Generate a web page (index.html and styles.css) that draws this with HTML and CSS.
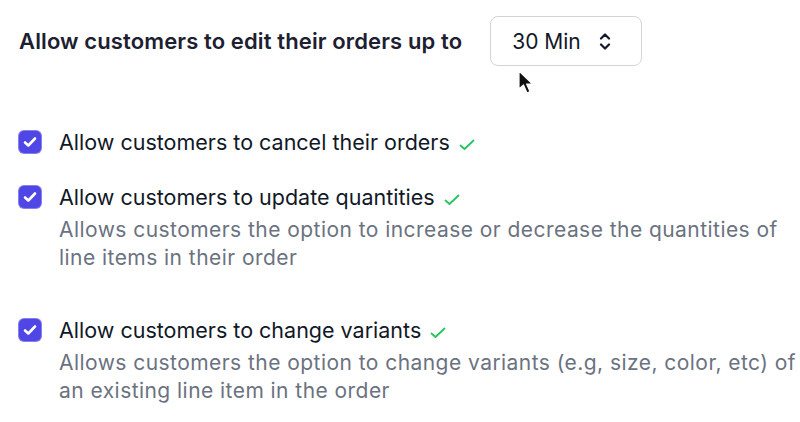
FILE: index.html
```html
<!DOCTYPE html>
<html lang="en">
<head>
<meta charset="utf-8">
<title>Order editing settings</title>
<link rel="stylesheet" href="styles.css">
</head>
<body>
<main class="settings">
  <div class="window-row">
    <span class="window-label">Allow customers to edit their orders up to</span>
    <div class="select">
      <span class="select-value">30 Min</span>
      <svg class="select-icon" width="12" height="17" viewBox="0 0 12 17" fill="none" stroke="#111827" stroke-width="2.2" stroke-linecap="round" stroke-linejoin="round"><path d="M2 5.5 L6 1.5 L10 5.5"/><path d="M2 11.5 L6 15.5 L10 11.5"/></svg>
      <svg class="cursor" width="18" height="26" viewBox="0 0 18 26"><path d="M1 1 L1 19 L5.5 15 L9 23 L12 21.6 L8.6 14 L14.5 14 Z" fill="#111" stroke="#fff" stroke-width="1.2" stroke-linejoin="round"/></svg>
    </div>
  </div>

  <ul class="options">
    <li class="option">
      <span class="checkbox"><svg width="14" height="12" viewBox="0 0 14 12" fill="none" stroke="#fff" stroke-width="2.6" stroke-linecap="round" stroke-linejoin="round"><path d="M2 6.5 L5.3 9.5 L12 2.5"/></svg></span>
      <div class="option-body">
        <div class="option-title">Allow customers to cancel their orders <svg class="ok" width="16" height="12" viewBox="0 0 16 12" fill="none" stroke="#22c55e" stroke-width="1.8" stroke-linecap="round" stroke-linejoin="round"><path d="M1.5 6.5 L5.5 10 L14.5 1.5"/></svg></div>
      </div>
    </li>
    <li class="option">
      <span class="checkbox"><svg width="14" height="12" viewBox="0 0 14 12" fill="none" stroke="#fff" stroke-width="2.6" stroke-linecap="round" stroke-linejoin="round"><path d="M2 6.5 L5.3 9.5 L12 2.5"/></svg></span>
      <div class="option-body">
        <div class="option-title">Allow customers to update quantities <svg class="ok" width="16" height="12" viewBox="0 0 16 12" fill="none" stroke="#22c55e" stroke-width="1.8" stroke-linecap="round" stroke-linejoin="round"><path d="M1.5 6.5 L5.5 10 L14.5 1.5"/></svg></div>
        <p class="option-desc">Allows customers the option to increase or decrease the quantities of line items in their order</p>
      </div>
    </li>
    <li class="option option-spaced">
      <span class="checkbox"><svg width="14" height="12" viewBox="0 0 14 12" fill="none" stroke="#fff" stroke-width="2.6" stroke-linecap="round" stroke-linejoin="round"><path d="M2 6.5 L5.3 9.5 L12 2.5"/></svg></span>
      <div class="option-body">
        <div class="option-title">Allow customers to change variants <svg class="ok" width="16" height="12" viewBox="0 0 16 12" fill="none" stroke="#22c55e" stroke-width="1.8" stroke-linecap="round" stroke-linejoin="round"><path d="M1.5 6.5 L5.5 10 L14.5 1.5"/></svg></div>
        <p class="option-desc">Allows customers the option to change variants (e.g, size, color, etc) of an existing line item in the order</p>
      </div>
    </li>
  </ul>
</main>
</body>
</html>
```

FILE: styles.css
```css
* { box-sizing: border-box; }
html, body { margin: 0; padding: 0; background: #ffffff; }
body {
  font-family: Inter, "Noto Sans", "Liberation Sans", sans-serif;
  color: #111827;
  width: 800px;
  height: 422px;
  overflow: hidden;
}
.settings {
  padding: 16px 0 0 19px;
}
.window-row {
  display: flex;
  align-items: center;
  gap: 28px;
}
.window-label {
  font-size: 22px;
  font-weight: 600;
  letter-spacing: 0.12px;
  color: #1c2030;
}
.select {
  position: relative;
  width: 152px;
  height: 50px;
  border: 1px solid #d1d5db;
  border-radius: 8px;
  display: flex;
  align-items: center;
  padding-left: 21px;
  gap: 18px;
}
.select-value {
  font-size: 21px;
  color: #111827;
}
.select-icon { display: block; }
.cursor {
  position: absolute;
  left: 27px;
  top: 53px;
}
.options {
  list-style: none;
  margin: 62px 0 0;
  padding: 0;
  display: flex;
  flex-direction: column;
}
.option {
  display: flex;
  align-items: flex-start;
  gap: 18px;
}
.option + .option { margin-top: 27px; }
.option-spaced.option { margin-top: 44px; }
.checkbox {
  width: 22px;
  height: 22px;
  margin-top: 3px;
  flex: none;
  background: #4f46e5;
  border-radius: 5px;
  box-shadow: 0 0 0 1px #8680ec;
  display: flex;
  align-items: center;
  justify-content: center;
}
.option-body { flex: none; width: 741px; }
.option-title {
  font-size: 21.5px;
  line-height: 28px;
  color: #111827;
}
.ok { margin-left: 3px; vertical-align: -1px; }
.option-desc {
  margin: 5px 0 0;
  font-size: 21px;
  letter-spacing: 0.45px;
  line-height: 28px;
  color: #6b7280;
}
```
